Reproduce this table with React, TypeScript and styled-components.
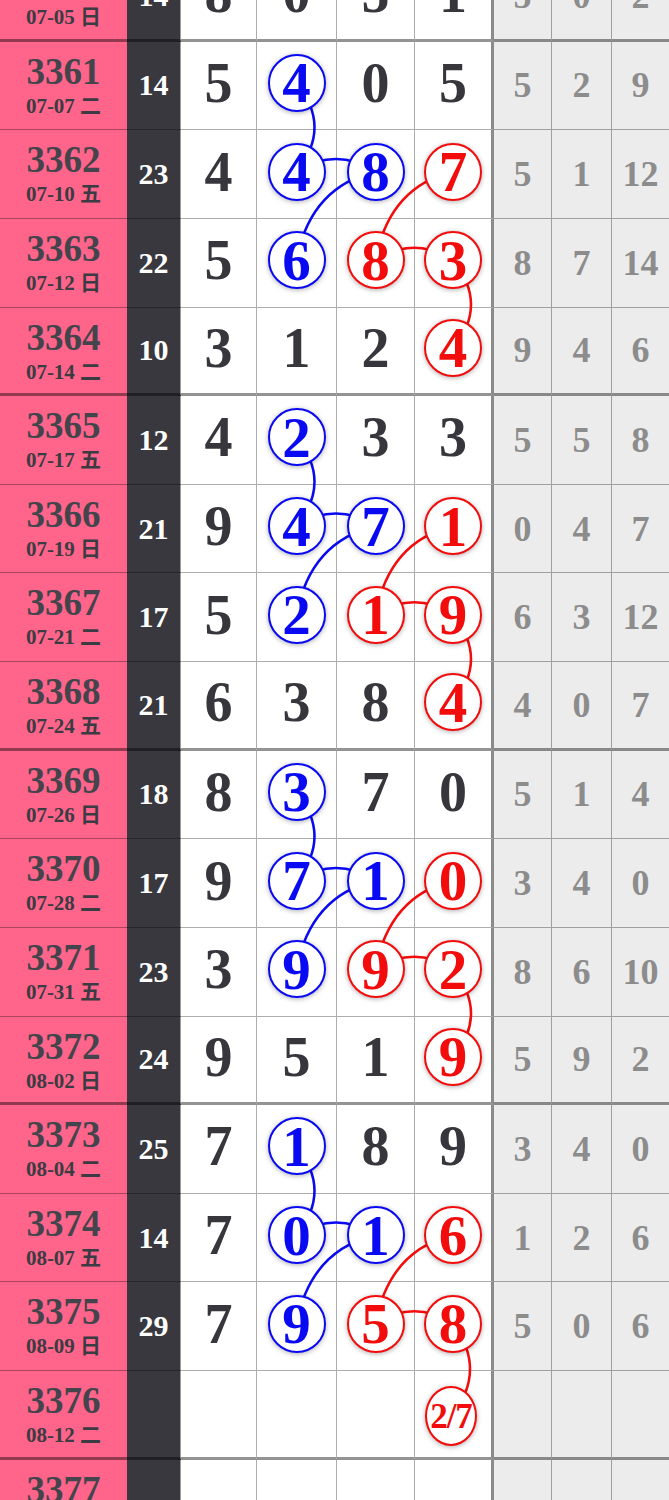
import React from 'react';
import styled, { createGlobalStyle, css } from 'styled-components';

const ROW_H = 88.625;
const CY = 41.3;
const X2 = 296.5;
const X3 = 375.5;
const X4 = 453;
const BLUE = '#0a0af2';
const RED = '#f20c0c';

type Tone = 'b' | 'r' | undefined;
interface Pick {
  v: string;
  c?: Tone;
}
interface Draw {
  no: string;
  date: string;
  sum: string;
  digits: Pick[];
  gray: string[];
  end?: boolean;
}

const p = (s: string): Pick[] =>
  s.split(' ').map((t) => {
    if (t === '-') return { v: '' };
    const last = t[t.length - 1];
    if (last === 'b' || last === 'r') return { v: t.slice(0, -1), c: last as Tone };
    return { v: t };
  });

const DRAWS: Draw[] = [
  { no: '3360', date: '07-05 日', sum: '14', digits: p('8 0 5 1'), gray: ['5', '0', '2'], end: true },
  { no: '3361', date: '07-07 二', sum: '14', digits: p('5 4b 0 5'), gray: ['5', '2', '9'] },
  { no: '3362', date: '07-10 五', sum: '23', digits: p('4 4b 8b 7r'), gray: ['5', '1', '12'] },
  { no: '3363', date: '07-12 日', sum: '22', digits: p('5 6b 8r 3r'), gray: ['8', '7', '14'] },
  { no: '3364', date: '07-14 二', sum: '10', digits: p('3 1 2 4r'), gray: ['9', '4', '6'], end: true },
  { no: '3365', date: '07-17 五', sum: '12', digits: p('4 2b 3 3'), gray: ['5', '5', '8'] },
  { no: '3366', date: '07-19 日', sum: '21', digits: p('9 4b 7b 1r'), gray: ['0', '4', '7'] },
  { no: '3367', date: '07-21 二', sum: '17', digits: p('5 2b 1r 9r'), gray: ['6', '3', '12'] },
  { no: '3368', date: '07-24 五', sum: '21', digits: p('6 3 8 4r'), gray: ['4', '0', '7'], end: true },
  { no: '3369', date: '07-26 日', sum: '18', digits: p('8 3b 7 0'), gray: ['5', '1', '4'] },
  { no: '3370', date: '07-28 二', sum: '17', digits: p('9 7b 1b 0r'), gray: ['3', '4', '0'] },
  { no: '3371', date: '07-31 五', sum: '23', digits: p('3 9b 9r 2r'), gray: ['8', '6', '10'] },
  { no: '3372', date: '08-02 日', sum: '24', digits: p('9 5 1 9r'), gray: ['5', '9', '2'], end: true },
  { no: '3373', date: '08-04 二', sum: '25', digits: p('7 1b 8 9'), gray: ['3', '4', '0'] },
  { no: '3374', date: '08-07 五', sum: '14', digits: p('7 0b 1b 6r'), gray: ['1', '2', '6'] },
  { no: '3375', date: '08-09 日', sum: '29', digits: p('7 9b 5r 8r'), gray: ['5', '0', '6'] },
  { no: '3376', date: '08-12 二', sum: '', digits: p('- - - 2/7r'), gray: ['', '', ''], end: true },
  { no: '3377', date: '08-14 四', sum: '', digits: p('- - - -'), gray: ['', '', ''] },
];

const GlobalStyle = createGlobalStyle`
  *, *::before, *::after { box-sizing: border-box; }
  html, body {
    margin: 0;
    padding: 0;
    overflow: hidden;
    background: #ffffff;
  }
  body {
    font-family: "Liberation Serif", "Noto Sans CJK SC", serif;
  }
`;

const Sheet = styled.div`
  position: relative;
  width: 669px;
  margin-top: -47px;
`;

const Row = styled.div`
  display: grid;
  grid-template-columns: 127px 54px 76px 80px 78px 79px 58px 60px 57px;
  height: ${ROW_H}px;
`;

const rule = css<{ $end?: boolean }>`
  border-bottom: ${(q) => (q.$end ? '3px solid rgba(0, 0, 0, 0.42)' : '1px solid rgba(0, 0, 0, 0.32)')};
`;

const IssueCell = styled.div<{ $end?: boolean }>`
  ${rule};
  background: #ff658a;
  display: flex;
  flex-direction: column;
  align-items: center;
  padding-top: 11px;
  color: #3b3b43;
`;

const IssueNo = styled.div`
  font-size: 37px;
  line-height: 37px;
  font-weight: 700;
  color: #44444c;
`;

const IssueDate = styled.div`
  margin-top: 6px;
  font-size: 21px;
  line-height: 21px;
  font-weight: 700;
  white-space: nowrap;
`;

const SumCell = styled.div<{ $end?: boolean }>`
  ${rule};
  background: #38383e;
  border-right: 1px solid #9c9c9c;
  display: flex;
  align-items: center;
  justify-content: center;
  color: #ffffff;
  font-size: 30px;
  font-weight: 700;
`;

const DigitCell = styled.div<{ $end?: boolean; $thick?: boolean }>`
  ${rule};
  background: #ffffff;
  border-right: ${(q) => (q.$thick ? '3px solid rgba(0, 0, 0, 0.45)' : '1px solid rgba(0, 0, 0, 0.32)')};
  display: flex;
  align-items: center;
  justify-content: center;
  padding-bottom: 5px;
  color: #36363c;
  font-size: 56px;
  font-weight: 700;
  line-height: 1;
`;

const GrayCell = styled.div<{ $end?: boolean; $last?: boolean }>`
  ${rule};
  background: #ececec;
  border-right: ${(q) => (q.$last ? 'none' : '1px solid rgba(0, 0, 0, 0.32)')};
  display: flex;
  align-items: center;
  justify-content: center;
  color: #8c8c8c;
  font-size: 36px;
  font-weight: 700;
  line-height: 1;
`;

const Ball = styled.div<{ $tone: 'b' | 'r'; $wide?: boolean }>`
  position: relative;
  z-index: 2;
  flex-shrink: 0;
  width: ${(q) => (q.$wide ? '52px' : '58px')};
  height: ${(q) => (q.$wide ? '60px' : '58px')};
  margin-top: ${(q) => (q.$wide ? '10px' : '0')};
  margin-right: ${(q) => (q.$wide ? '4px' : '0')};
  border-radius: 50%;
  border: 2.5px solid ${(q) => (q.$tone === 'b' ? BLUE : RED)};
  background: #ffffff;
  color: ${(q) => (q.$tone === 'b' ? BLUE : RED)};
  box-shadow: 0 1px 5px rgba(0, 0, 0, 0.32);
  display: flex;
  align-items: center;
  justify-content: center;
  font-size: ${(q) => (q.$wide ? '35px' : '57px')};
  font-weight: 700;
  line-height: 1;
  letter-spacing: ${(q) => (q.$wide ? '-1px' : '0')};
`;

const Links = styled.svg`
  position: absolute;
  left: 0;
  top: 0;
  z-index: 1;
  pointer-events: none;
`;

const cy = (i: number) => i * ROW_H + CY;

const segA = (x1: number, y1: number, x2: number, y2: number) =>
  `M${x1} ${y1} Q${(x1 + x2) / 2 + 36} ${(y1 + y2) / 2} ${x2} ${y2}`;
const segB = (x1: number, x2: number, y: number) =>
  `M${x1} ${y} Q${(x1 + x2) / 2} ${y - 25} ${x2} ${y}`;
const segC = (x1: number, y1: number, x2: number, y2: number) => {
  const mx = (x1 + x2) / 2;
  const my = (y1 + y2) / 2;
  const k = 0.65;
  const qx = mx + k * (x2 - mx);
  const qy = my + k * (y1 - my);
  return `M${x1} ${y1} Q${qx} ${qy} ${x2} ${y2}`;
};

const blueParts: string[] = [];
const redParts: string[] = [];
for (let g = 0; g < 4; g++) {
  const r0 = 1 + 4 * g;
  blueParts.push(segA(X2, cy(r0), X2, cy(r0 + 1)));
  blueParts.push(segB(X2, X3, cy(r0 + 1)));
  blueParts.push(segC(X3, cy(r0 + 1), X2, cy(r0 + 2)));
  redParts.push(segC(X4, cy(r0 + 1), X3, cy(r0 + 2)));
  redParts.push(segB(X3, X4, cy(r0 + 2)));
  const lastY = g === 3 ? (r0 + 3) * ROW_H + 46 : cy(r0 + 3);
  const lastX = g === 3 ? 451 : X4;
  redParts.push(segA(X4, cy(r0 + 2), lastX, lastY));
}

export default function App() {
  const totalH = DRAWS.length * ROW_H;
  return (
    <>
      <GlobalStyle />
      <Sheet>
        {DRAWS.map((d) => (
          <Row key={d.no}>
            <IssueCell $end={d.end}>
              <IssueNo>{d.no}</IssueNo>
              <IssueDate>{d.date}</IssueDate>
            </IssueCell>
            <SumCell $end={d.end}>{d.sum}</SumCell>
            {d.digits.map((x, i) => (
              <DigitCell key={i} $end={d.end} $thick={i === 3}>
                {x.c ? (
                  <Ball $tone={x.c} $wide={x.v.length > 1}>
                    {x.v}
                  </Ball>
                ) : (
                  x.v
                )}
              </DigitCell>
            ))}
            {d.gray.map((v, i) => (
              <GrayCell key={i} $end={d.end} $last={i === 2}>
                {v}
              </GrayCell>
            ))}
          </Row>
        ))}
        <Links width={669} height={totalH} viewBox={`0 0 669 ${totalH}`}>
          <path d={blueParts.join(' ')} fill="none" stroke={BLUE} strokeWidth={2.5} />
          <path d={redParts.join(' ')} fill="none" stroke={RED} strokeWidth={2.5} />
        </Links>
      </Sheet>
    </>
  );
}
